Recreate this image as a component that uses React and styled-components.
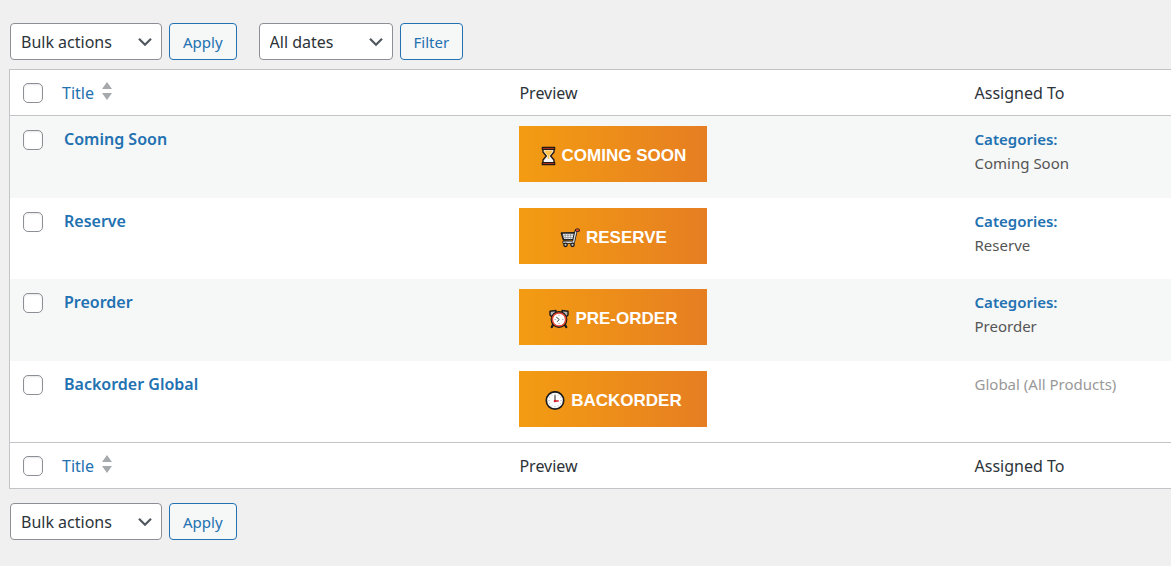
import React from 'react'
import styled, { createGlobalStyle } from 'styled-components'

const GlobalStyle = createGlobalStyle`
  * { box-sizing: border-box; }
  body {
    margin: 0;
    background: #f0f0f0;
    color: #2c3338;
    font-family: "Noto Sans", "Open Sans", sans-serif;
    font-size: 16px;
    line-height: 24px;
  }
`

const Page = styled.main`
  padding: 23px 0 26px 9px;
`

const Toolbar = styled.form`
  display: flex;
  flex-wrap: wrap;
  gap: 22px;
  padding-left: 1px;
`

const ActionGroup = styled.div`
  display: flex;
  gap: 7px;
`

const SelectBox = styled.div`
  display: grid;
  align-items: center;
  width: ${props => props.$width};

  > * { grid-area: 1 / 1; }
  svg {
    justify-self: end;
    margin-right: 9px;
    pointer-events: none;
  }
`

const Select = styled.select`
  appearance: none;
  width: 100%;
  height: 37px;
  padding: 0 30px 0 10px;
  border: 1px solid #8c8f94;
  border-radius: 4px;
  background: #fff;
  color: #2c3338;
  font: inherit;
`

const Button = styled.button`
  height: 37px;
  padding: 0 13px;
  border: 1px solid #2271b1;
  border-radius: 4px;
  background: #f6f7f7;
  color: #2271b1;
  font: inherit;
  font-size: 15px;
  cursor: pointer;
`

const TableFrame = styled.div`
  margin: 9px 0 14px;
  border: 1px solid #c3c4c7;
  border-right: 0;
  background: #fff;
`

const Table = styled.table`
  width: 100%;
  table-layout: fixed;
  border-collapse: separate;
  border-spacing: 0;
  text-align: left;
`

const HeadCell = styled.th`
  width: ${props => props.$width || 'auto'};
  height: 46px;
  padding: 0 10px;
  font-weight: 400;
  border: 0 solid #c3c4c7;
  border-width: ${props => (props.$foot ? '1px 0 0' : '0 0 1px')};
`

const CheckCell = styled(HeadCell)`
  padding: 0 0 0 13px;
`

const Row = styled.tr`
  height: 81px;
  &:nth-child(odd) {
    height: 82px;
    background: #f6f7f7;
  }
`

const Cell = styled.td`
  padding: 10px 10px 0;
  vertical-align: top;
`

const RowCheck = styled(Cell)`
  padding: 14px 0 0 13px;
`

const TitleCell = styled(Cell)`
  padding-top: 11px;
  padding-left: 12px;
`

const AssignedCell = styled(Cell)`
  padding-top: 11px;
  font-size: 15px;
`

const Checkbox = styled.input`
  appearance: none;
  display: block;
  width: 20px;
  height: 20px;
  margin: 0;
  border: 1px solid #8c8f94;
  border-radius: 5px;
  background: #fff;
  box-shadow: inset 0 1px 2px rgba(0, 0, 0, 0.1);
`

const SortLink = styled.a`
  display: inline-flex;
  align-items: center;
  gap: 7px;
  color: #2271b1;
  text-decoration: none;
`

const TitleLink = styled.a`
  color: #2271b1;
  font-weight: 600;
  text-decoration: none;
`

const Banner = styled.div`
  display: flex;
  align-items: center;
  justify-content: center;
  gap: 6px;
  width: 188px;
  height: 56px;
  padding-top: 3px;
  background: linear-gradient(90deg, #f39c12, #e67e22);
  color: #fff;
  font: bold 17px/20px "Liberation Sans", Arial, sans-serif;
  white-space: nowrap;
`

const Scope = styled.div`
  color: #2271b1;
  font-weight: 600;
`

const Terms = styled.div`
  color: ${props => (props.$muted ? '#999' : '#555')};
`

function Chevron() {
  return (
    <svg width="16" height="16" viewBox="0 0 16 16" fill="none" stroke="#50575e" strokeWidth="2.2" aria-hidden="true">
      <path d="M2 4.8 8 10.8 14 4.8" />
    </svg>
  )
}

function SortArrows() {
  return (
    <svg width="12" height="22" viewBox="0 0 12 22" fill="#a7aaad" aria-hidden="true">
      <path d="M6 0 11 7H1ZM1 11H11L6 18Z" />
    </svg>
  )
}

function Hourglass() {
  return (
    <svg width="15" height="20" viewBox="0 0 15 20" aria-hidden="true">
      <path d="M2 3h11v3L9.700 10l3.300 4V17H2v-3L5.300 10 2 6z" fill="#f4f4f4" stroke="#241a16" strokeWidth="1.400" strokeLinejoin="round" />
      <path d="M3.500 4.500h8v1.300L8.300 9.500v3.200H6.700V9.500L3.500 5.800z" fill="#ffc24a" />
      <path d="M1.300 1.300h12.400v2H1.300zM1.300 16.700h12.400v2H1.300z" fill="#d13b28" stroke="#241a16" strokeWidth="1.200" strokeLinejoin="round" />
    </svg>
  )
}

function Cart() {
  return (
    <svg width="20" height="20" viewBox="0 0 20 20" fill="none" strokeLinecap="round" strokeLinejoin="round" aria-hidden="true">
      <path d="M1.500 5 15 4.800 13.300 11.500 3.500 11.800z" fill="#f2f2f2" stroke="#1c1c1c" strokeWidth="1.700" />
      <path d="M2.800 7.300 13.800 7.200M3.400 9.600 13.300 9.500M5.200 6v5M7.900 6v5M10.600 6v5" stroke="#8a8a8a" strokeWidth=".7" />
      <path d="M18 2.200 16 3 13.500 14.300H3.800" stroke="#1c1c1c" strokeWidth="3" />
      <path d="M16 3 13.500 14.300H3.800" stroke="#d6d6d6" strokeWidth="1.400" />
      <path d="M16.800 2.300h1.200" stroke="#1c1c1c" strokeWidth="3.600" />
      <path d="M16.800 2.300h1.200" stroke="#e74836" strokeWidth="2" />
      <circle cx="5.500" cy="16.800" r="1.700" fill="#ccc" stroke="#1c1c1c" strokeWidth="1.300" />
      <circle cx="12.500" cy="16.800" r="1.700" fill="#ccc" stroke="#1c1c1c" strokeWidth="1.300" />
    </svg>
  )
}

function AlarmClock() {
  return (
    <svg width="20" height="20" viewBox="0 0 20 20" fill="none" strokeLinecap="round" strokeLinejoin="round" aria-hidden="true">
      <path d="M4.500 15 2.800 18M15.500 15l1.700 3" stroke="#1c1c1c" strokeWidth="2.400" />
      <path d="M1 2.200 7 1.500 6.500 5 2.500 7.500 1 6zM19 2.200 13 1.500l.5 3.500 4 2.500L19 6z" fill="#b4b4b4" stroke="#1c1c1c" strokeWidth="1.400" />
      <circle cx="10" cy="10.500" r="7.200" fill="#fff" stroke="#1c1c1c" strokeWidth="2.400" />
      <circle cx="10" cy="10.500" r="6.600" fill="#fff" stroke="#e74836" strokeWidth="1.500" />
      <path d="M7.500 8.300 10.300 10.500 8.300 12.500" stroke="#444" strokeWidth="1" />
      <path d="M10 6.200v.4M14 10.500h-.4M10 14.800v-.4M6 10.500h.4" stroke="#888" strokeWidth=".8" />
    </svg>
  )
}

function Clock() {
  return (
    <svg width="20" height="20" viewBox="0 0 20 20" fill="none" strokeLinecap="round" aria-hidden="true">
      <circle cx="10" cy="9.500" r="8.700" fill="#fff" stroke="#1c1c1c" strokeWidth="1.700" />
      <path d="M10 3v.4M16.300 9.500h-.4M10 16v-.4M3.700 9.500h.4M13.300 4l-.2.300M15.500 6.200l-.3.200M15.500 12.800l-.3-.2M13.300 15l-.2-.3M6.700 15l.2-.3M4.500 12.800l.3-.2M4.500 6.200l.3.200M6.700 4l.2.300" stroke="#999" strokeWidth=".8" />
      <path d="M10 4.500V10" stroke="#222" strokeWidth="1" />
      <path d="M10 10h3.300" stroke="#d3222a" strokeWidth="1.300" />
      <circle cx="10" cy="10" r="1.300" fill="#d3222a" />
    </svg>
  )
}

const labels = [
  { id: 1, title: 'Coming Soon', text: 'COMING SOON', Icon: Hourglass, category: 'Coming Soon' },
  { id: 2, title: 'Reserve', text: 'RESERVE', Icon: Cart, category: 'Reserve' },
  { id: 3, title: 'Preorder', text: 'PRE-ORDER', Icon: AlarmClock, category: 'Preorder' },
  { id: 4, title: 'Backorder Global', text: 'BACKORDER', Icon: Clock },
]

function SelectField({ label, value, width }) {
  return (
    <SelectBox $width={width}>
      <Select aria-label={label}>
        <option>{value}</option>
      </Select>
      <Chevron />
    </SelectBox>
  )
}

function BulkActions() {
  return (
    <ActionGroup>
      <SelectField label="Select bulk action" value="Bulk actions" width="152px" />
      <Button type="button">Apply</Button>
    </ActionGroup>
  )
}

function HeadRow({ foot }) {
  return (
    <tr>
      <CheckCell $foot={foot} $width="42px">
        <Checkbox type="checkbox" aria-label="Select all" />
      </CheckCell>
      <HeadCell $foot={foot} $width="39.4%" scope="col">
        <SortLink href="#title">Title <SortArrows /></SortLink>
      </HeadCell>
      <HeadCell $foot={foot} $width="39.2%" scope="col">Preview</HeadCell>
      <HeadCell $foot={foot} scope="col">Assigned To</HeadCell>
    </tr>
  )
}

function LabelRow({ label }) {
  const { title, text, Icon, category } = label

  return (
    <Row>
      <RowCheck>
        <Checkbox type="checkbox" aria-label={`Select ${title}`} />
      </RowCheck>
      <TitleCell>
        <TitleLink href="#edit">{title}</TitleLink>
      </TitleCell>
      <Cell>
        <Banner><Icon />{text}</Banner>
      </Cell>
      <AssignedCell>
        {category ? (
          <>
            <Scope>Categories:</Scope>
            <Terms>{category}</Terms>
          </>
        ) : (
          <Terms $muted>Global (All Products)</Terms>
        )}
      </AssignedCell>
    </Row>
  )
}

function App() {
  return (
    <Page>
      <GlobalStyle />
      <Toolbar>
        <BulkActions />
        <ActionGroup>
          <SelectField label="Filter by date" value="All dates" width="134px" />
          <Button type="button">Filter</Button>
        </ActionGroup>
      </Toolbar>

      <TableFrame>
        <Table>
          <thead><HeadRow /></thead>
          <tbody>
            {labels.map(label => (
              <LabelRow key={label.id} label={label} />
            ))}
          </tbody>
          <tfoot><HeadRow foot /></tfoot>
        </Table>
      </TableFrame>

      <Toolbar>
        <BulkActions />
      </Toolbar>
    </Page>
  )
}

export default App
